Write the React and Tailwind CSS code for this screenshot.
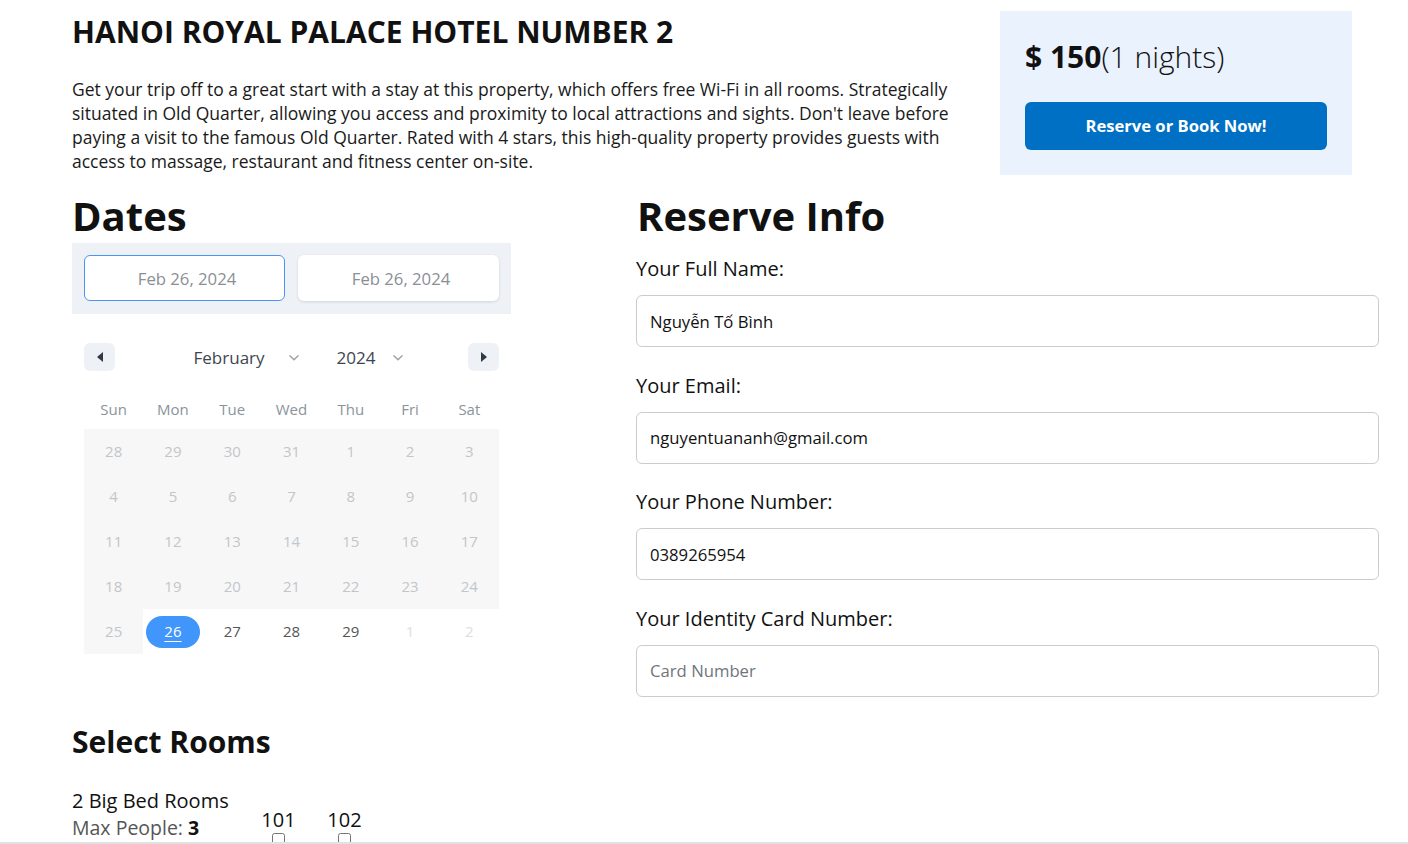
import { useState } from "react";

const WEEKDAYS = ["Sun", "Mon", "Tue", "Wed", "Thu", "Fri", "Sat"];

// 5 weeks shown for February 2024
const WEEKS = [
  [28, 29, 30, 31, 1, 2, 3],
  [4, 5, 6, 7, 8, 9, 10],
  [11, 12, 13, 14, 15, 16, 17],
  [18, 19, 20, 21, 22, 23, 24],
  [25, 26, 27, 28, 29, 1, 2],
];

function dayState(week, col) {
  if (week < 4) return "past";
  if (col === 0) return "past";
  if (col === 1) return "selected";
  if (col >= 5) return "next";
  return "open";
}

const Chevron = () => (
  <svg className="w-[14px] h-[14px] text-[#9aa1a8]" viewBox="0 0 24 24" fill="none" stroke="currentColor" strokeWidth={2.4} strokeLinecap="round" strokeLinejoin="round">
    <path d="M5 8l7 7 7-7" />
  </svg>
);

function Field({ label, value, placeholder }) {
  return (
    <div className="mb-[24.5px]">
      <label className="block text-[20px] leading-[28px] text-[#111]">{label}</label>
      <input
        className="mt-[12px] w-full h-[52px] border border-[#cccccc] rounded-md px-[13px] text-[16.7px] text-[#111] placeholder:text-[#6f757b] outline-none bg-white"
        defaultValue={value}
        placeholder={placeholder}
      />
    </div>
  );
}

export default function App() {
  const [rooms, setRooms] = useState({ 101: false, 102: false });

  return (
    <div className="min-h-screen bg-white font-['Open_Sans',sans-serif] text-[#111] pl-[72px] pr-[29px]">
      {/* header */}
      <div className="flex items-start">
        <div className="w-[885px]">
          <h1 className="pt-[14px] text-[30px] leading-[36px] font-bold">HANOI ROYAL PALACE HOTEL NUMBER 2</h1>
          <p className="mt-[27px] text-[17.5px] leading-[24px] text-[#1a1a1a]">
            Get your trip off to a great start with a stay at this property, which offers free Wi-Fi in all rooms. Strategically
            situated in Old Quarter, allowing you access and proximity to local attractions and sights. Don't leave before
            paying a visit to the famous Old Quarter. Rated with 4 stars, this high-quality property provides guests with
            access to massage, restaurant and fitness center on-site.
          </p>
        </div>
        <div className="ml-auto mr-[27px] mt-[11px] w-[352px] h-[164px] bg-[#eaf2fd] px-[25px] pt-[26px]">
          <div className="text-[30px] leading-[40px]">
            <span className="font-bold">$ 150</span>
            <span className="font-light">(1 nights)</span>
          </div>
          <button className="mt-[25px] w-full h-[48px] rounded-md bg-[#0070c4] text-white font-bold text-[16.6px] pt-[1px]">
            Reserve or Book Now!
          </button>
        </div>
      </div>

      {/* main */}
      <div className="grid grid-cols-[564px_1fr] mt-[17px]">
        <div>
          <h2 className="text-[40px] leading-[48px] font-bold">Dates</h2>
          <div className="mt-[3px] w-[439px] bg-[#eef1f6] p-[12px] pb-[13px] flex gap-[13px]">
            <div className="w-[201px] h-[46px] rounded-md bg-white border border-[#4b93f6] flex items-center justify-center text-[16.7px] text-[#8a8f95] pt-[1px] pl-[5px]">
              Feb 26, 2024
            </div>
            <div className="w-[201px] h-[46px] rounded-md bg-white shadow-[0_1px_3px_rgba(0,0,0,0.12)] flex items-center justify-center text-[16.7px] text-[#8a8f95] pt-[1px] pl-[5px]">
              Feb 26, 2024
            </div>
          </div>

          {/* calendar */}
          <div className="ml-[12px] w-[415px] mt-[29px]">
            <div className="flex items-center h-[28px]">
              <button className="w-[31px] h-[28px] rounded-md bg-[#eef1f6] flex items-center justify-center">
                <span className="w-0 h-0 border-y-[5px] border-y-transparent border-r-[6px] border-r-[#2f3a46]" />
              </button>
              <div className="flex-1 flex items-center justify-center gap-[36px] pl-[16px] pt-[2px] text-[17px] text-[#3d4650]">
                <div className="flex items-center gap-[22px]">
                  <span>February</span>
                  <Chevron />
                </div>
                <div className="flex items-center gap-[16px]">
                  <span>2024</span>
                  <Chevron />
                </div>
              </div>
              <button className="w-[31px] h-[28px] rounded-md bg-[#eef1f6] flex items-center justify-center">
                <span className="w-0 h-0 border-y-[5px] border-y-transparent border-l-[6px] border-l-[#2f3a46]" />
              </button>
            </div>

            <div className="grid grid-cols-7 mt-[19px] h-[39px] items-center text-[15px] text-[#8b939b] text-center">
              {WEEKDAYS.map((d) => (
                <span key={d}>{d}</span>
              ))}
            </div>

            <div className="grid grid-cols-7 text-[15px] text-center">
              {WEEKS.map((week, w) =>
                week.map((day, c) => {
                  const s = dayState(w, c);
                  return (
                    <div
                      key={w + "-" + c}
                      className={
                        "h-[45px] flex items-center justify-center " +
                        (s === "past" ? "bg-[#f7f7f7] text-[#c2c6ca]" : "bg-white")
                      }
                    >
                      {s === "selected" ? (
                        <span className="w-[54px] h-[32px] rounded-full bg-[#4096fa] text-white underline underline-offset-[4px] flex items-center justify-center">
                          {day}
                        </span>
                      ) : (
                        <span className={s === "open" ? "text-[#555]" : s === "next" ? "text-[#dedede]" : ""}>
                          {day}
                        </span>
                      )}
                    </div>
                  );
                })
              )}
            </div>
          </div>

          {/* rooms */}
          <h2 className="mt-[70px] text-[30px] leading-[36px] font-bold">Select Rooms</h2>
          <div className="mt-[29px] flex">
            <div className="w-[190px]">
              <div className="text-[20px] leading-[24px]">2 Big Bed Rooms</div>
              <div className="text-[19.5px] leading-[30px] text-[#555]">
                Max People: <span className="font-bold text-[#111]">3</span>
              </div>
            </div>
            <div className="flex gap-[33px] mt-[20px]">
              {["101", "102"].map((r) => (
                <label key={r} className="flex flex-col items-center w-[33px]">
                  <span className="text-[20px] leading-[22px]">{r}</span>
                  <input
                    type="checkbox"
                    checked={rooms[r]}
                    onChange={() => setRooms({ ...rooms, [r]: !rooms[r] })}
                    className="mt-[2px] w-[13px] h-[13px]"
                  />
                </label>
              ))}
            </div>
          </div>
        </div>

        <div>
          <h2 className="pl-[1px] text-[40px] leading-[48px] font-bold">Reserve Info</h2>
          <div className="mt-[15px]">
            <Field label="Your Full Name:" value="Nguyễn Tố Bình" />
            <Field label="Your Email:" value="nguyentuananh@gmail.com" />
            <Field label="Your Phone Number:" value="0389265954" />
            <Field label="Your Identity Card Number:" placeholder="Card Number" />
          </div>
        </div>
      </div>

      <div className="fixed left-0 right-0 bottom-0 h-[2px] bg-[#e2e2e2]" />
    </div>
  );
}
